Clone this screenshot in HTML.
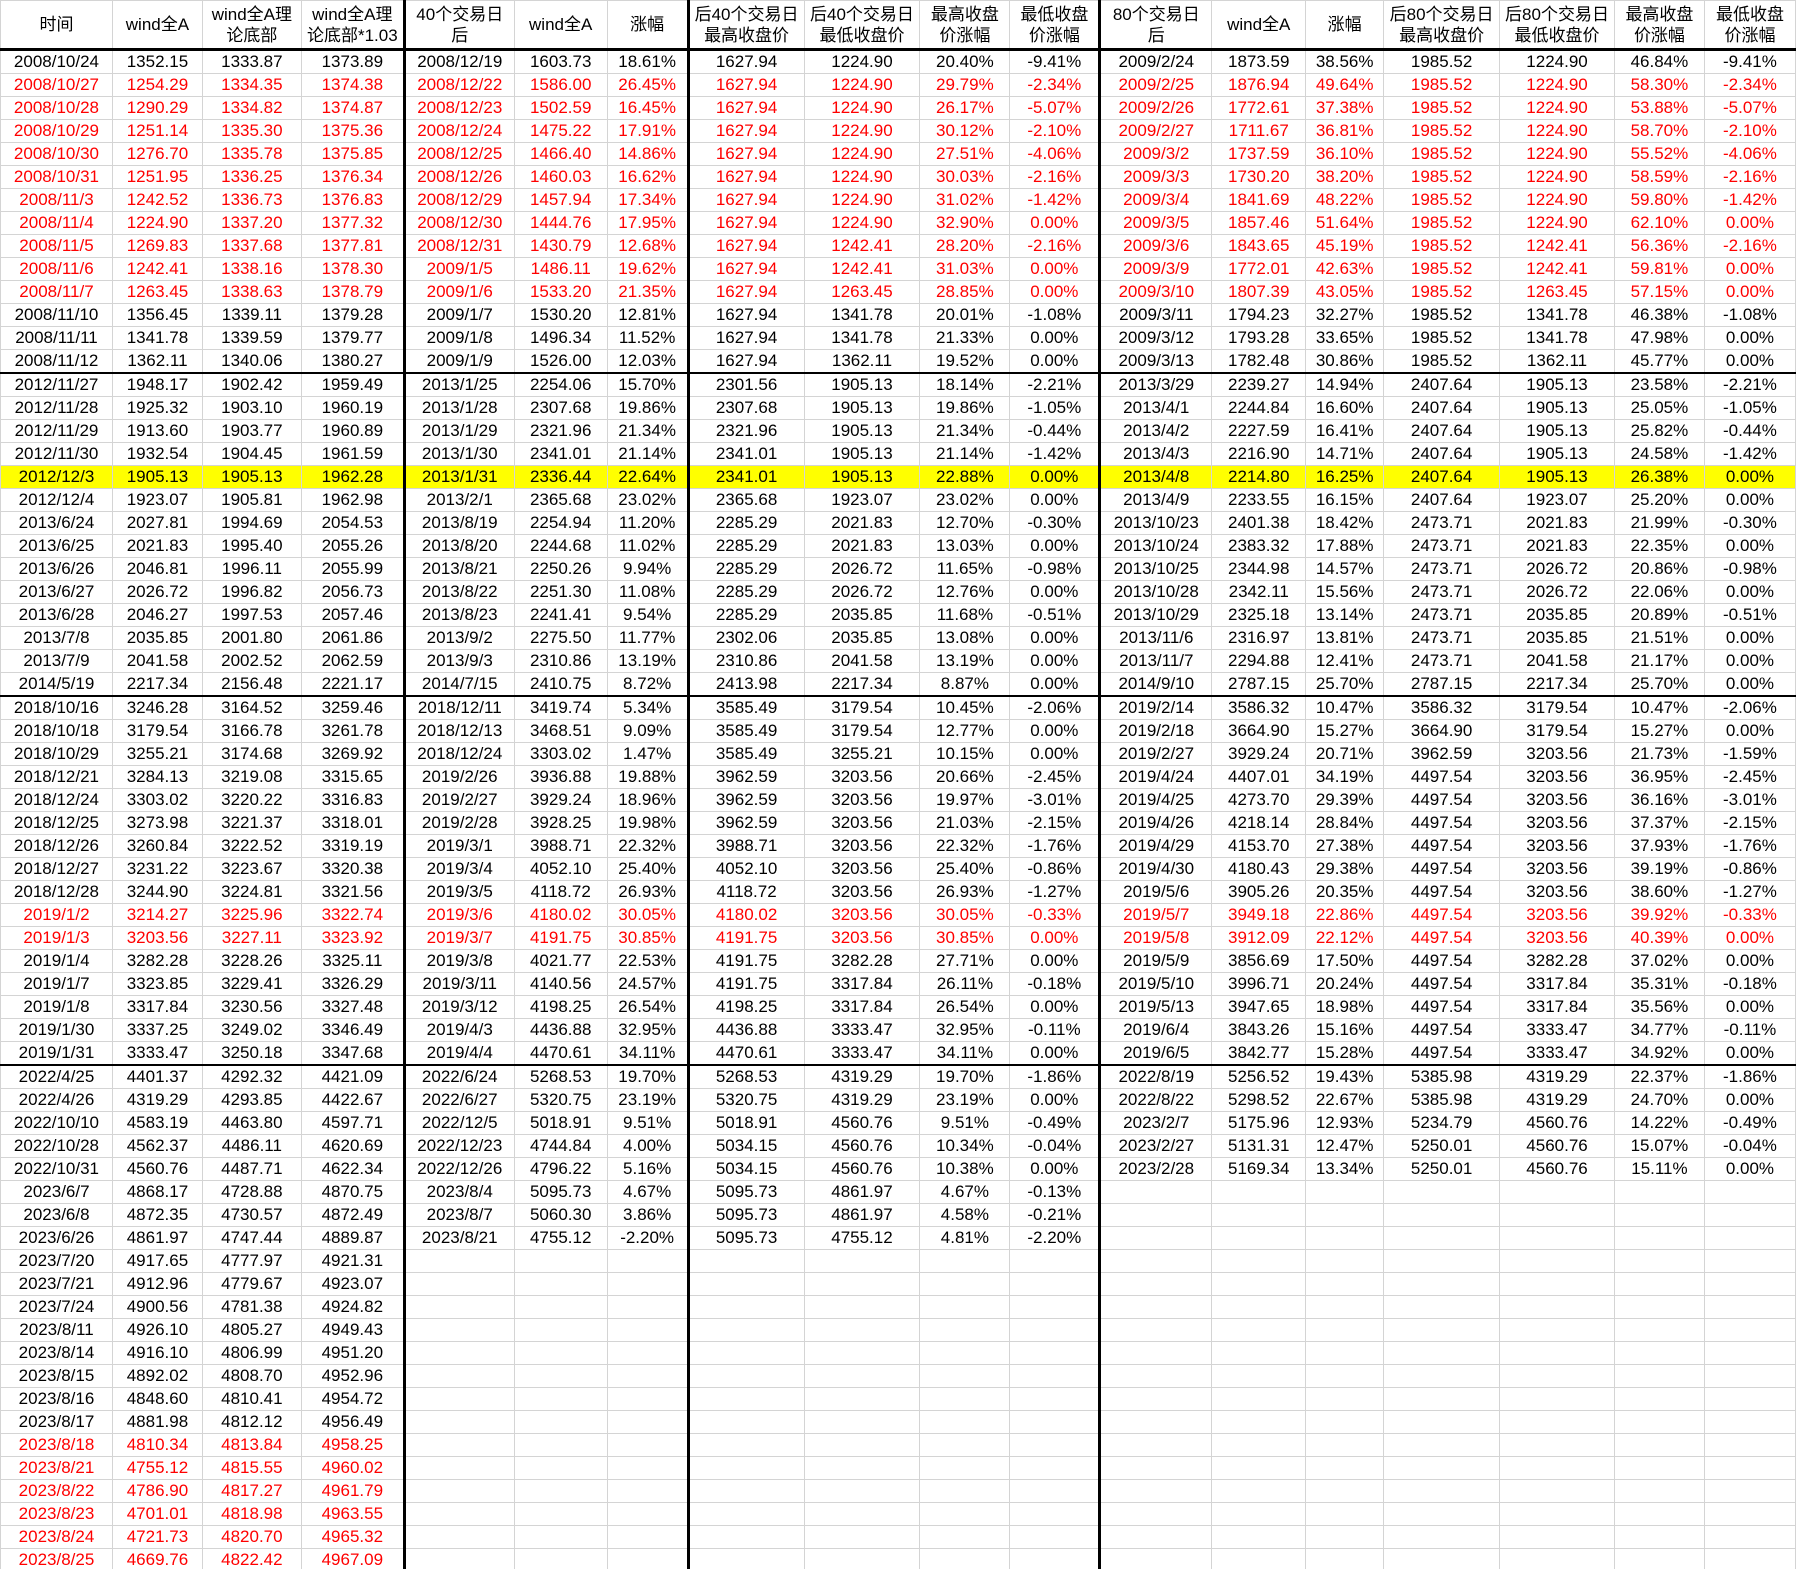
<!DOCTYPE html>
<html><head><meta charset="utf-8">
<style>
html,body{margin:0;padding:0;background:#fff;width:1796px;height:1569px;overflow:hidden}
table{border-collapse:collapse;table-layout:fixed;font-family:"Liberation Sans","Noto Sans CJK SC",sans-serif;font-size:17px;color:#000}
td,th{border:1px solid #d4d4d4;text-align:center;padding:0;white-space:nowrap;overflow:hidden;height:22px;line-height:20px}
th{font-weight:normal;font-size:17px;height:47px;line-height:21px;border-bottom:3px solid #000;white-space:normal}
td:nth-child(5),th:nth-child(5),td:nth-child(8),th:nth-child(8),td:nth-child(12),th:nth-child(12){border-left:3px solid #000}
td:nth-child(15),th:nth-child(15){border-left:1px solid #333}
tr.r{color:#f00}
tr.y td{background:#ff0}
tr.g td{border-top:2px solid #000}
</style></head><body>
<table>
<colgroup><col style="width:112px"><col style="width:90px"><col style="width:99px"><col style="width:103px"><col style="width:110px"><col style="width:93px"><col style="width:81px"><col style="width:116px"><col style="width:116px"><col style="width:90px"><col style="width:90px"><col style="width:112px"><col style="width:94px"><col style="width:78px"><col style="width:116px"><col style="width:115px"><col style="width:90px"><col style="width:91px"></colgroup>
<tr><th>时间<th>wind全A<th>wind全A理<br>论底部<th>wind全A理<br>论底部*1.03<th>40个交易日<br>后<th>wind全A<th>涨幅<th>后40个交易日<br>最高收盘价<th>后40个交易日<br>最低收盘价<th>最高收盘<br>价涨幅<th>最低收盘<br>价涨幅<th>80个交易日<br>后<th>wind全A<th>涨幅<th>后80个交易日<br>最高收盘价<th>后80个交易日<br>最低收盘价<th>最高收盘<br>价涨幅<th>最低收盘<br>价涨幅</tr>
<tr><td>2008/10/24<td>1352.15<td>1333.87<td>1373.89<td>2008/12/19<td>1603.73<td>18.61%<td>1627.94<td>1224.90<td>20.40%<td>-9.41%<td>2009/2/24<td>1873.59<td>38.56%<td>1985.52<td>1224.90<td>46.84%<td>-9.41%</tr>
<tr class="r"><td>2008/10/27<td>1254.29<td>1334.35<td>1374.38<td>2008/12/22<td>1586.00<td>26.45%<td>1627.94<td>1224.90<td>29.79%<td>-2.34%<td>2009/2/25<td>1876.94<td>49.64%<td>1985.52<td>1224.90<td>58.30%<td>-2.34%</tr>
<tr class="r"><td>2008/10/28<td>1290.29<td>1334.82<td>1374.87<td>2008/12/23<td>1502.59<td>16.45%<td>1627.94<td>1224.90<td>26.17%<td>-5.07%<td>2009/2/26<td>1772.61<td>37.38%<td>1985.52<td>1224.90<td>53.88%<td>-5.07%</tr>
<tr class="r"><td>2008/10/29<td>1251.14<td>1335.30<td>1375.36<td>2008/12/24<td>1475.22<td>17.91%<td>1627.94<td>1224.90<td>30.12%<td>-2.10%<td>2009/2/27<td>1711.67<td>36.81%<td>1985.52<td>1224.90<td>58.70%<td>-2.10%</tr>
<tr class="r"><td>2008/10/30<td>1276.70<td>1335.78<td>1375.85<td>2008/12/25<td>1466.40<td>14.86%<td>1627.94<td>1224.90<td>27.51%<td>-4.06%<td>2009/3/2<td>1737.59<td>36.10%<td>1985.52<td>1224.90<td>55.52%<td>-4.06%</tr>
<tr class="r"><td>2008/10/31<td>1251.95<td>1336.25<td>1376.34<td>2008/12/26<td>1460.03<td>16.62%<td>1627.94<td>1224.90<td>30.03%<td>-2.16%<td>2009/3/3<td>1730.20<td>38.20%<td>1985.52<td>1224.90<td>58.59%<td>-2.16%</tr>
<tr class="r"><td>2008/11/3<td>1242.52<td>1336.73<td>1376.83<td>2008/12/29<td>1457.94<td>17.34%<td>1627.94<td>1224.90<td>31.02%<td>-1.42%<td>2009/3/4<td>1841.69<td>48.22%<td>1985.52<td>1224.90<td>59.80%<td>-1.42%</tr>
<tr class="r"><td>2008/11/4<td>1224.90<td>1337.20<td>1377.32<td>2008/12/30<td>1444.76<td>17.95%<td>1627.94<td>1224.90<td>32.90%<td>0.00%<td>2009/3/5<td>1857.46<td>51.64%<td>1985.52<td>1224.90<td>62.10%<td>0.00%</tr>
<tr class="r"><td>2008/11/5<td>1269.83<td>1337.68<td>1377.81<td>2008/12/31<td>1430.79<td>12.68%<td>1627.94<td>1242.41<td>28.20%<td>-2.16%<td>2009/3/6<td>1843.65<td>45.19%<td>1985.52<td>1242.41<td>56.36%<td>-2.16%</tr>
<tr class="r"><td>2008/11/6<td>1242.41<td>1338.16<td>1378.30<td>2009/1/5<td>1486.11<td>19.62%<td>1627.94<td>1242.41<td>31.03%<td>0.00%<td>2009/3/9<td>1772.01<td>42.63%<td>1985.52<td>1242.41<td>59.81%<td>0.00%</tr>
<tr class="r"><td>2008/11/7<td>1263.45<td>1338.63<td>1378.79<td>2009/1/6<td>1533.20<td>21.35%<td>1627.94<td>1263.45<td>28.85%<td>0.00%<td>2009/3/10<td>1807.39<td>43.05%<td>1985.52<td>1263.45<td>57.15%<td>0.00%</tr>
<tr><td>2008/11/10<td>1356.45<td>1339.11<td>1379.28<td>2009/1/7<td>1530.20<td>12.81%<td>1627.94<td>1341.78<td>20.01%<td>-1.08%<td>2009/3/11<td>1794.23<td>32.27%<td>1985.52<td>1341.78<td>46.38%<td>-1.08%</tr>
<tr><td>2008/11/11<td>1341.78<td>1339.59<td>1379.77<td>2009/1/8<td>1496.34<td>11.52%<td>1627.94<td>1341.78<td>21.33%<td>0.00%<td>2009/3/12<td>1793.28<td>33.65%<td>1985.52<td>1341.78<td>47.98%<td>0.00%</tr>
<tr><td>2008/11/12<td>1362.11<td>1340.06<td>1380.27<td>2009/1/9<td>1526.00<td>12.03%<td>1627.94<td>1362.11<td>19.52%<td>0.00%<td>2009/3/13<td>1782.48<td>30.86%<td>1985.52<td>1362.11<td>45.77%<td>0.00%</tr>
<tr class="g"><td>2012/11/27<td>1948.17<td>1902.42<td>1959.49<td>2013/1/25<td>2254.06<td>15.70%<td>2301.56<td>1905.13<td>18.14%<td>-2.21%<td>2013/3/29<td>2239.27<td>14.94%<td>2407.64<td>1905.13<td>23.58%<td>-2.21%</tr>
<tr><td>2012/11/28<td>1925.32<td>1903.10<td>1960.19<td>2013/1/28<td>2307.68<td>19.86%<td>2307.68<td>1905.13<td>19.86%<td>-1.05%<td>2013/4/1<td>2244.84<td>16.60%<td>2407.64<td>1905.13<td>25.05%<td>-1.05%</tr>
<tr><td>2012/11/29<td>1913.60<td>1903.77<td>1960.89<td>2013/1/29<td>2321.96<td>21.34%<td>2321.96<td>1905.13<td>21.34%<td>-0.44%<td>2013/4/2<td>2227.59<td>16.41%<td>2407.64<td>1905.13<td>25.82%<td>-0.44%</tr>
<tr><td>2012/11/30<td>1932.54<td>1904.45<td>1961.59<td>2013/1/30<td>2341.01<td>21.14%<td>2341.01<td>1905.13<td>21.14%<td>-1.42%<td>2013/4/3<td>2216.90<td>14.71%<td>2407.64<td>1905.13<td>24.58%<td>-1.42%</tr>
<tr class="y"><td>2012/12/3<td>1905.13<td>1905.13<td>1962.28<td>2013/1/31<td>2336.44<td>22.64%<td>2341.01<td>1905.13<td>22.88%<td>0.00%<td>2013/4/8<td>2214.80<td>16.25%<td>2407.64<td>1905.13<td>26.38%<td>0.00%</tr>
<tr><td>2012/12/4<td>1923.07<td>1905.81<td>1962.98<td>2013/2/1<td>2365.68<td>23.02%<td>2365.68<td>1923.07<td>23.02%<td>0.00%<td>2013/4/9<td>2233.55<td>16.15%<td>2407.64<td>1923.07<td>25.20%<td>0.00%</tr>
<tr><td>2013/6/24<td>2027.81<td>1994.69<td>2054.53<td>2013/8/19<td>2254.94<td>11.20%<td>2285.29<td>2021.83<td>12.70%<td>-0.30%<td>2013/10/23<td>2401.38<td>18.42%<td>2473.71<td>2021.83<td>21.99%<td>-0.30%</tr>
<tr><td>2013/6/25<td>2021.83<td>1995.40<td>2055.26<td>2013/8/20<td>2244.68<td>11.02%<td>2285.29<td>2021.83<td>13.03%<td>0.00%<td>2013/10/24<td>2383.32<td>17.88%<td>2473.71<td>2021.83<td>22.35%<td>0.00%</tr>
<tr><td>2013/6/26<td>2046.81<td>1996.11<td>2055.99<td>2013/8/21<td>2250.26<td>9.94%<td>2285.29<td>2026.72<td>11.65%<td>-0.98%<td>2013/10/25<td>2344.98<td>14.57%<td>2473.71<td>2026.72<td>20.86%<td>-0.98%</tr>
<tr><td>2013/6/27<td>2026.72<td>1996.82<td>2056.73<td>2013/8/22<td>2251.30<td>11.08%<td>2285.29<td>2026.72<td>12.76%<td>0.00%<td>2013/10/28<td>2342.11<td>15.56%<td>2473.71<td>2026.72<td>22.06%<td>0.00%</tr>
<tr><td>2013/6/28<td>2046.27<td>1997.53<td>2057.46<td>2013/8/23<td>2241.41<td>9.54%<td>2285.29<td>2035.85<td>11.68%<td>-0.51%<td>2013/10/29<td>2325.18<td>13.14%<td>2473.71<td>2035.85<td>20.89%<td>-0.51%</tr>
<tr><td>2013/7/8<td>2035.85<td>2001.80<td>2061.86<td>2013/9/2<td>2275.50<td>11.77%<td>2302.06<td>2035.85<td>13.08%<td>0.00%<td>2013/11/6<td>2316.97<td>13.81%<td>2473.71<td>2035.85<td>21.51%<td>0.00%</tr>
<tr><td>2013/7/9<td>2041.58<td>2002.52<td>2062.59<td>2013/9/3<td>2310.86<td>13.19%<td>2310.86<td>2041.58<td>13.19%<td>0.00%<td>2013/11/7<td>2294.88<td>12.41%<td>2473.71<td>2041.58<td>21.17%<td>0.00%</tr>
<tr><td>2014/5/19<td>2217.34<td>2156.48<td>2221.17<td>2014/7/15<td>2410.75<td>8.72%<td>2413.98<td>2217.34<td>8.87%<td>0.00%<td>2014/9/10<td>2787.15<td>25.70%<td>2787.15<td>2217.34<td>25.70%<td>0.00%</tr>
<tr class="g"><td>2018/10/16<td>3246.28<td>3164.52<td>3259.46<td>2018/12/11<td>3419.74<td>5.34%<td>3585.49<td>3179.54<td>10.45%<td>-2.06%<td>2019/2/14<td>3586.32<td>10.47%<td>3586.32<td>3179.54<td>10.47%<td>-2.06%</tr>
<tr><td>2018/10/18<td>3179.54<td>3166.78<td>3261.78<td>2018/12/13<td>3468.51<td>9.09%<td>3585.49<td>3179.54<td>12.77%<td>0.00%<td>2019/2/18<td>3664.90<td>15.27%<td>3664.90<td>3179.54<td>15.27%<td>0.00%</tr>
<tr><td>2018/10/29<td>3255.21<td>3174.68<td>3269.92<td>2018/12/24<td>3303.02<td>1.47%<td>3585.49<td>3255.21<td>10.15%<td>0.00%<td>2019/2/27<td>3929.24<td>20.71%<td>3962.59<td>3203.56<td>21.73%<td>-1.59%</tr>
<tr><td>2018/12/21<td>3284.13<td>3219.08<td>3315.65<td>2019/2/26<td>3936.88<td>19.88%<td>3962.59<td>3203.56<td>20.66%<td>-2.45%<td>2019/4/24<td>4407.01<td>34.19%<td>4497.54<td>3203.56<td>36.95%<td>-2.45%</tr>
<tr><td>2018/12/24<td>3303.02<td>3220.22<td>3316.83<td>2019/2/27<td>3929.24<td>18.96%<td>3962.59<td>3203.56<td>19.97%<td>-3.01%<td>2019/4/25<td>4273.70<td>29.39%<td>4497.54<td>3203.56<td>36.16%<td>-3.01%</tr>
<tr><td>2018/12/25<td>3273.98<td>3221.37<td>3318.01<td>2019/2/28<td>3928.25<td>19.98%<td>3962.59<td>3203.56<td>21.03%<td>-2.15%<td>2019/4/26<td>4218.14<td>28.84%<td>4497.54<td>3203.56<td>37.37%<td>-2.15%</tr>
<tr><td>2018/12/26<td>3260.84<td>3222.52<td>3319.19<td>2019/3/1<td>3988.71<td>22.32%<td>3988.71<td>3203.56<td>22.32%<td>-1.76%<td>2019/4/29<td>4153.70<td>27.38%<td>4497.54<td>3203.56<td>37.93%<td>-1.76%</tr>
<tr><td>2018/12/27<td>3231.22<td>3223.67<td>3320.38<td>2019/3/4<td>4052.10<td>25.40%<td>4052.10<td>3203.56<td>25.40%<td>-0.86%<td>2019/4/30<td>4180.43<td>29.38%<td>4497.54<td>3203.56<td>39.19%<td>-0.86%</tr>
<tr><td>2018/12/28<td>3244.90<td>3224.81<td>3321.56<td>2019/3/5<td>4118.72<td>26.93%<td>4118.72<td>3203.56<td>26.93%<td>-1.27%<td>2019/5/6<td>3905.26<td>20.35%<td>4497.54<td>3203.56<td>38.60%<td>-1.27%</tr>
<tr class="r"><td>2019/1/2<td>3214.27<td>3225.96<td>3322.74<td>2019/3/6<td>4180.02<td>30.05%<td>4180.02<td>3203.56<td>30.05%<td>-0.33%<td>2019/5/7<td>3949.18<td>22.86%<td>4497.54<td>3203.56<td>39.92%<td>-0.33%</tr>
<tr class="r"><td>2019/1/3<td>3203.56<td>3227.11<td>3323.92<td>2019/3/7<td>4191.75<td>30.85%<td>4191.75<td>3203.56<td>30.85%<td>0.00%<td>2019/5/8<td>3912.09<td>22.12%<td>4497.54<td>3203.56<td>40.39%<td>0.00%</tr>
<tr><td>2019/1/4<td>3282.28<td>3228.26<td>3325.11<td>2019/3/8<td>4021.77<td>22.53%<td>4191.75<td>3282.28<td>27.71%<td>0.00%<td>2019/5/9<td>3856.69<td>17.50%<td>4497.54<td>3282.28<td>37.02%<td>0.00%</tr>
<tr><td>2019/1/7<td>3323.85<td>3229.41<td>3326.29<td>2019/3/11<td>4140.56<td>24.57%<td>4191.75<td>3317.84<td>26.11%<td>-0.18%<td>2019/5/10<td>3996.71<td>20.24%<td>4497.54<td>3317.84<td>35.31%<td>-0.18%</tr>
<tr><td>2019/1/8<td>3317.84<td>3230.56<td>3327.48<td>2019/3/12<td>4198.25<td>26.54%<td>4198.25<td>3317.84<td>26.54%<td>0.00%<td>2019/5/13<td>3947.65<td>18.98%<td>4497.54<td>3317.84<td>35.56%<td>0.00%</tr>
<tr><td>2019/1/30<td>3337.25<td>3249.02<td>3346.49<td>2019/4/3<td>4436.88<td>32.95%<td>4436.88<td>3333.47<td>32.95%<td>-0.11%<td>2019/6/4<td>3843.26<td>15.16%<td>4497.54<td>3333.47<td>34.77%<td>-0.11%</tr>
<tr><td>2019/1/31<td>3333.47<td>3250.18<td>3347.68<td>2019/4/4<td>4470.61<td>34.11%<td>4470.61<td>3333.47<td>34.11%<td>0.00%<td>2019/6/5<td>3842.77<td>15.28%<td>4497.54<td>3333.47<td>34.92%<td>0.00%</tr>
<tr class="g"><td>2022/4/25<td>4401.37<td>4292.32<td>4421.09<td>2022/6/24<td>5268.53<td>19.70%<td>5268.53<td>4319.29<td>19.70%<td>-1.86%<td>2022/8/19<td>5256.52<td>19.43%<td>5385.98<td>4319.29<td>22.37%<td>-1.86%</tr>
<tr><td>2022/4/26<td>4319.29<td>4293.85<td>4422.67<td>2022/6/27<td>5320.75<td>23.19%<td>5320.75<td>4319.29<td>23.19%<td>0.00%<td>2022/8/22<td>5298.52<td>22.67%<td>5385.98<td>4319.29<td>24.70%<td>0.00%</tr>
<tr><td>2022/10/10<td>4583.19<td>4463.80<td>4597.71<td>2022/12/5<td>5018.91<td>9.51%<td>5018.91<td>4560.76<td>9.51%<td>-0.49%<td>2023/2/7<td>5175.96<td>12.93%<td>5234.79<td>4560.76<td>14.22%<td>-0.49%</tr>
<tr><td>2022/10/28<td>4562.37<td>4486.11<td>4620.69<td>2022/12/23<td>4744.84<td>4.00%<td>5034.15<td>4560.76<td>10.34%<td>-0.04%<td>2023/2/27<td>5131.31<td>12.47%<td>5250.01<td>4560.76<td>15.07%<td>-0.04%</tr>
<tr><td>2022/10/31<td>4560.76<td>4487.71<td>4622.34<td>2022/12/26<td>4796.22<td>5.16%<td>5034.15<td>4560.76<td>10.38%<td>0.00%<td>2023/2/28<td>5169.34<td>13.34%<td>5250.01<td>4560.76<td>15.11%<td>0.00%</tr>
<tr><td>2023/6/7<td>4868.17<td>4728.88<td>4870.75<td>2023/8/4<td>5095.73<td>4.67%<td>5095.73<td>4861.97<td>4.67%<td>-0.13%<td><td><td><td><td><td><td></tr>
<tr><td>2023/6/8<td>4872.35<td>4730.57<td>4872.49<td>2023/8/7<td>5060.30<td>3.86%<td>5095.73<td>4861.97<td>4.58%<td>-0.21%<td><td><td><td><td><td><td></tr>
<tr><td>2023/6/26<td>4861.97<td>4747.44<td>4889.87<td>2023/8/21<td>4755.12<td>-2.20%<td>5095.73<td>4755.12<td>4.81%<td>-2.20%<td><td><td><td><td><td><td></tr>
<tr><td>2023/7/20<td>4917.65<td>4777.97<td>4921.31<td><td><td><td><td><td><td><td><td><td><td><td><td><td></tr>
<tr><td>2023/7/21<td>4912.96<td>4779.67<td>4923.07<td><td><td><td><td><td><td><td><td><td><td><td><td><td></tr>
<tr><td>2023/7/24<td>4900.56<td>4781.38<td>4924.82<td><td><td><td><td><td><td><td><td><td><td><td><td><td></tr>
<tr><td>2023/8/11<td>4926.10<td>4805.27<td>4949.43<td><td><td><td><td><td><td><td><td><td><td><td><td><td></tr>
<tr><td>2023/8/14<td>4916.10<td>4806.99<td>4951.20<td><td><td><td><td><td><td><td><td><td><td><td><td><td></tr>
<tr><td>2023/8/15<td>4892.02<td>4808.70<td>4952.96<td><td><td><td><td><td><td><td><td><td><td><td><td><td></tr>
<tr><td>2023/8/16<td>4848.60<td>4810.41<td>4954.72<td><td><td><td><td><td><td><td><td><td><td><td><td><td></tr>
<tr><td>2023/8/17<td>4881.98<td>4812.12<td>4956.49<td><td><td><td><td><td><td><td><td><td><td><td><td><td></tr>
<tr class="r"><td>2023/8/18<td>4810.34<td>4813.84<td>4958.25<td><td><td><td><td><td><td><td><td><td><td><td><td><td></tr>
<tr class="r"><td>2023/8/21<td>4755.12<td>4815.55<td>4960.02<td><td><td><td><td><td><td><td><td><td><td><td><td><td></tr>
<tr class="r"><td>2023/8/22<td>4786.90<td>4817.27<td>4961.79<td><td><td><td><td><td><td><td><td><td><td><td><td><td></tr>
<tr class="r"><td>2023/8/23<td>4701.01<td>4818.98<td>4963.55<td><td><td><td><td><td><td><td><td><td><td><td><td><td></tr>
<tr class="r"><td>2023/8/24<td>4721.73<td>4820.70<td>4965.32<td><td><td><td><td><td><td><td><td><td><td><td><td><td></tr>
<tr class="r"><td>2023/8/25<td>4669.76<td>4822.42<td>4967.09<td><td><td><td><td><td><td><td><td><td><td><td><td><td></tr>
</table>
</body></html>
